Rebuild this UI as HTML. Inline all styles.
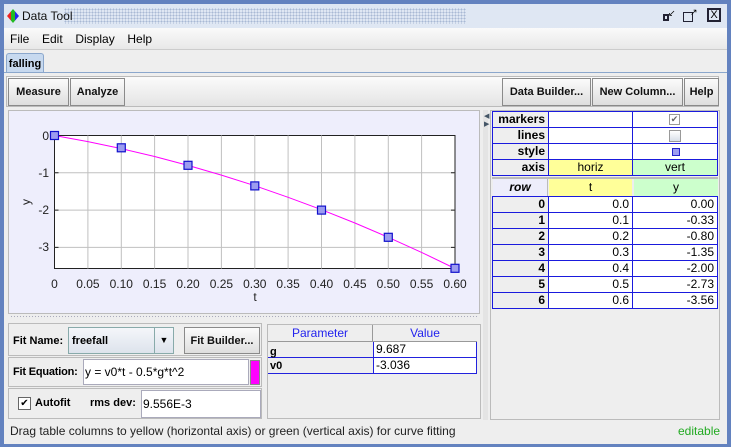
<!DOCTYPE html>
<html><head><meta charset="utf-8"><style>
*{box-sizing:border-box;margin:0;padding:0}
body{width:731px;height:447px;overflow:hidden;background:#6382bf;font-family:"Liberation Sans",sans-serif;font-size:12px;position:relative}
.a{position:absolute}
.b{font-weight:bold;font-size:11px}
.btn{position:absolute;border:1px solid #8a8a8a;background:linear-gradient(#fbfbfb,#dedede);font-weight:bold;font-size:11px;text-align:center;line-height:26px;color:#111;white-space:nowrap}
.cell{position:absolute;border-right:1px solid #1a1add;border-bottom:1px solid #1a1add;font-size:12px;line-height:15px;padding:0 3px}
</style></head><body>
<div class="a" style="left:4px;top:4px;width:723px;height:440px;background:#eeeeee"></div>
<div class="a" style="left:4px;top:4px;width:723px;height:24px;background:#dfe7f3"></div>
<div class="a" style="left:64px;top:8px;width:402px;height:16px;background-image:radial-gradient(#a9b9d4 0.8px,transparent 1px);background-size:3px 3px"></div>
<div class="a" style="left:7px;top:9px;width:12px;height:14px;background:linear-gradient(90deg,#e22 0,#e22 33%,#2b2 33%,#2b2 66%,#22e 66%);clip-path:polygon(50% 0,100% 50%,50% 100%,0 50%)"></div>
<div class="a" style="left:22px;top:9px;font-size:12px;color:#111">Data Tool</div>
<div class="a" style="left:663px;top:14px;width:6px;height:7px;border:2px solid #223;background:#dfe7f3"></div>
<div class="a" style="left:668px;top:8px;font-size:9px">↙</div>
<div class="a" style="left:683px;top:12px;width:10px;height:10px;border:1px solid #223"></div>
<div class="a" style="left:690px;top:7px;font-size:9px">↗</div>
<div class="a" style="left:707px;top:8px;width:14px;height:14px;border:2px solid #223;font-size:11px;line-height:10px;text-align:center">X</div>
<div class="a" style="left:4px;top:28px;width:723px;height:22px;background:linear-gradient(#fafafa,#e8e8e8);border-bottom:1px solid #ccc"></div>
<div class="a" style="left:10px;top:32px;font-size:12px;word-spacing:3px">File&nbsp; Edit&nbsp; Display&nbsp; Help</div>
<div class="a" style="left:6px;top:53px;width:38px;height:20px;background:#c7d9ef;border:1px solid #8ba7cc;border-bottom:none;border-radius:3px 3px 0 0;text-align:center;line-height:18px" ><span class="b">falling</span></div>
<div class="a" style="left:4px;top:72px;width:723px;height:1px;background:#8ba7cc"></div>
<div class="a" style="left:6px;top:76px;width:713px;height:31px;background:linear-gradient(#fbfbfb,#e4e4e4);border:1px solid #bbb"></div>
<div class="btn" style="left:8px;top:78px;width:61px;height:28px">Measure</div>
<div class="btn" style="left:70px;top:78px;width:55px;height:28px">Analyze</div>
<div class="btn" style="left:502px;top:78px;width:89px;height:28px">Data Builder...</div>
<div class="btn" style="left:592px;top:78px;width:91px;height:28px">New Column...</div>
<div class="btn" style="left:684px;top:78px;width:35px;height:28px">Help</div>
<div class="a" style="left:8px;top:110px;width:472px;height:204px;background:#eeeefc;border:1px solid #bbb"></div>
<div class="a" style="left:10px;top:315px;width:468px;height:4px;background-image:radial-gradient(#aab 0.6px,transparent 0.8px);background-size:3px 3px"></div>
<svg class="a" style="left:0;top:0" width="731" height="447">
<rect x="54.5" y="135.5" width="400.5" height="133" fill="#fff" stroke="#222"/>
<g stroke="#c0c0c0">
<path d="M87.9 135.5V268.5M121.3 135.5V268.5M154.6 135.5V268.5M188 135.5V268.5M221.4 135.5V268.5M254.8 135.5V268.5M288.1 135.5V268.5M321.5 135.5V268.5M354.9 135.5V268.5M388.3 135.5V268.5M421.6 135.5V268.5M54.5 172.8H455M54.5 210.1H455M54.5 247.4H455"/>
</g>
<g stroke="#222"><path d="M54.5 172.8h4M54.5 210.1h4M54.5 247.4h4M451 172.8h4M451 210.1h4M451 247.4h4"/></g>
<polyline fill="none" stroke="#f0f" stroke-width="1" points="54.5,135.5 87.9,141.6 121.3,148.6 154.6,156.5 188,165.4 221.4,175.1 254.8,185.7 288.1,197.3 321.5,209.7 354.9,223 388.3,237.3 421.6,252.4 455,268.5"/>
<g fill="#9c9cf0" stroke="#11c" stroke-width="1.2">
<rect x="50.5" y="131.5" width="8" height="8"/><rect x="117.3" y="143.8" width="8" height="8"/><rect x="184" y="161.3" width="8" height="8"/><rect x="250.8" y="181.9" width="8" height="8"/><rect x="317.5" y="206.1" width="8" height="8"/><rect x="384.3" y="233.3" width="8" height="8"/><rect x="451" y="264.3" width="8" height="8"/>
</g>
<g font-family="Liberation Sans" font-size="12" fill="#222" text-anchor="middle">
<text x="54.5" y="288">0</text><text x="87.9" y="288">0.05</text><text x="121.3" y="288">0.10</text><text x="154.6" y="288">0.15</text><text x="188" y="288">0.20</text><text x="221.4" y="288">0.25</text><text x="254.8" y="288">0.30</text><text x="288.1" y="288">0.35</text><text x="321.5" y="288">0.40</text><text x="354.9" y="288">0.45</text><text x="388.3" y="288">0.50</text><text x="421.6" y="288">0.55</text><text x="455" y="288">0.60</text>
<text x="255" y="301">t</text>
<g text-anchor="end"><text x="49" y="140">0</text><text x="49" y="177">-1</text><text x="49" y="214">-2</text><text x="49" y="251">-3</text></g>
<text x="30" y="202" transform="rotate(-90 30 202)" text-anchor="middle">y</text>
</g>
</svg>
<div class="a" style="left:483px;top:110px;width:5px;height:310px;background:#e4e4e4"></div>
<div class="a" style="left:484px;top:112px;font-size:7px;color:#456">◀<br>▶</div>
<div class="a" style="left:8px;top:323px;width:254px;height:33px;background:#eee;border:1px solid #bbb"></div>
<div class="a b" style="left:13px;top:335px">Fit Name:</div>
<div class="a" style="left:68px;top:327px;width:106px;height:27px;background:linear-gradient(#f4f6fa,#dde3ec);border:1px solid #8aa;padding:5px 3px" ><span class="b">freefall</span></div>
<div class="a" style="left:154px;top:328px;width:19px;height:25px;border-left:1px solid #8aa;font-size:9px;line-height:25px;text-align:center">▼</div>
<div class="btn" style="left:184px;top:327px;width:76px;height:27px">Fit Builder...</div>
<div class="a" style="left:8px;top:357px;width:254px;height:30px;background:#eee;border:1px solid #bbb"></div>
<div class="a b" style="left:13px;top:366px;letter-spacing:-0.2px">Fit Equation:</div>
<div class="a" style="left:83px;top:359px;width:166px;height:26px;background:#fff;border:1px solid #aab;padding:5px 1px">y = v0*t - 0.5*g*t^2</div>
<div class="a" style="left:250px;top:360px;width:10px;height:25px;background:#f0f;border:1px solid #888"></div>
<div class="a" style="left:8px;top:388px;width:254px;height:31px;background:#eee;border:1px solid #bbb"></div>
<div class="a" style="left:18px;top:397px;width:13px;height:13px;border:1px solid #666;background:#fff;font-size:10px;line-height:11px;text-align:center">✔</div>
<div class="a b" style="left:35px;top:397px">Autofit</div>
<div class="a b" style="left:90px;top:397px">rms dev:</div>
<div class="a" style="left:141px;top:390px;width:120px;height:28px;background:#fff;border:1px solid #aab;padding:6px 1px">9.556E-3</div>
<div class="a" style="left:267px;top:324px;width:214px;height:95px;background:#eee;border:1px solid #bbb"></div>
<div class="a" style="left:268px;top:325px;width:105px;height:17px;border-right:1px solid #999;border-bottom:1px solid #999;color:#22e;text-align:center;line-height:16px">Parameter</div>
<div class="a" style="left:373px;top:325px;width:104px;height:17px;border-bottom:1px solid #999;color:#22e;text-align:center;line-height:16px">Value</div>
<div class="a" style="left:268px;top:342px;width:105px;height:16px;border-bottom:1px solid #22d;padding-left:2px;line-height:18px" ><span class="b">g</span></div>
<div class="a" style="left:373px;top:342px;width:104px;height:16px;background:#fff;border:1px solid #22d;border-top:none;padding-left:2px;line-height:15px">9.687</div>
<div class="a" style="left:268px;top:358px;width:105px;height:16px;border-bottom:1px solid #22d;padding-left:2px;line-height:15px" ><span class="b">v0</span></div>
<div class="a" style="left:373px;top:358px;width:104px;height:16px;background:#fff;border:1px solid #22d;border-top:none;padding-left:2px;line-height:15px">-3.036</div>
<div class="a" style="left:490px;top:110px;width:230px;height:310px;background:#eee;border:1px solid #bbb"></div>
<div class="a" style="left:492px;top:111px;width:226px;height:65px;background:#fff;border-top:1px solid #1a1add;border-left:1px solid #1a1add"></div>
<div class="cell b" style="left:493px;top:112px;width:56px;height:16px;background:#eee;text-align:right;font-size:12px">markers</div>
<div class="cell" style="left:549px;top:112px;width:84px;height:16px"></div>
<div class="cell" style="left:633px;top:112px;width:85px;height:16px"></div>
<div class="a" style="left:669px;top:114px;width:11px;height:11px;border:1px solid #999;font-size:9px;line-height:9px;color:#666;text-align:center">✔</div>
<div class="cell b" style="left:493px;top:128px;width:56px;height:16px;background:#eee;text-align:right;font-size:12px">lines</div>
<div class="cell" style="left:549px;top:128px;width:84px;height:16px"></div>
<div class="cell" style="left:633px;top:128px;width:85px;height:16px"></div>
<div class="a" style="left:669px;top:130px;width:12px;height:12px;border:1px solid #999;background:linear-gradient(#fff,#d8dfe9)"></div>
<div class="cell b" style="left:493px;top:144px;width:56px;height:16px;background:#eee;text-align:right;font-size:12px">style</div>
<div class="cell" style="left:549px;top:144px;width:84px;height:16px"></div>
<div class="cell" style="left:633px;top:144px;width:85px;height:16px"></div>
<div class="a" style="left:672px;top:148px;width:8px;height:8px;border:1px solid #22c;background:#9c9cf0"></div>
<div class="cell b" style="left:493px;top:160px;width:56px;height:16px;background:#eee;text-align:right;font-size:12px">axis</div>
<div class="cell" style="left:549px;top:160px;width:84px;height:16px;background:#ffff99;text-align:center">horiz</div>
<div class="cell" style="left:633px;top:160px;width:85px;height:16px;background:#ccffcc;text-align:center">vert</div>
<div class="a" style="left:492px;top:177px;width:226px;height:2px;background:#bbb"></div>
<div class="a" style="left:493px;top:179px;width:55px;height:17px;background:#ededfb;border-right:1px solid #bbb;text-align:center;line-height:17px;font-weight:bold;font-style:italic">row</div>
<div class="a" style="left:549px;top:179px;width:83px;height:17px;background:#ffff99;text-align:center;line-height:17px">t</div>
<div class="a" style="left:634px;top:179px;width:84px;height:17px;background:#ccffcc;text-align:center;line-height:17px">y</div>
<div class="a" style="left:492px;top:196px;width:226px;height:113px;background:#fff;border-top:1px solid #1a1add;border-left:1px solid #1a1add"></div>
<div class="cell b" style="left:493px;top:197px;width:56px;height:16px;background:#eee;text-align:right;font-size:12px">0</div><div class="cell" style="left:549px;top:197px;width:84px;height:16px;text-align:right">0.0</div><div class="cell" style="left:633px;top:197px;width:85px;height:16px;text-align:right">0.00</div>
<div class="cell b" style="left:493px;top:213px;width:56px;height:16px;background:#eee;text-align:right;font-size:12px">1</div><div class="cell" style="left:549px;top:213px;width:84px;height:16px;text-align:right">0.1</div><div class="cell" style="left:633px;top:213px;width:85px;height:16px;text-align:right">-0.33</div>
<div class="cell b" style="left:493px;top:229px;width:56px;height:16px;background:#eee;text-align:right;font-size:12px">2</div><div class="cell" style="left:549px;top:229px;width:84px;height:16px;text-align:right">0.2</div><div class="cell" style="left:633px;top:229px;width:85px;height:16px;text-align:right">-0.80</div>
<div class="cell b" style="left:493px;top:245px;width:56px;height:16px;background:#eee;text-align:right;font-size:12px">3</div><div class="cell" style="left:549px;top:245px;width:84px;height:16px;text-align:right">0.3</div><div class="cell" style="left:633px;top:245px;width:85px;height:16px;text-align:right">-1.35</div>
<div class="cell b" style="left:493px;top:261px;width:56px;height:16px;background:#eee;text-align:right;font-size:12px">4</div><div class="cell" style="left:549px;top:261px;width:84px;height:16px;text-align:right">0.4</div><div class="cell" style="left:633px;top:261px;width:85px;height:16px;text-align:right">-2.00</div>
<div class="cell b" style="left:493px;top:277px;width:56px;height:16px;background:#eee;text-align:right;font-size:12px">5</div><div class="cell" style="left:549px;top:277px;width:84px;height:16px;text-align:right">0.5</div><div class="cell" style="left:633px;top:277px;width:85px;height:16px;text-align:right">-2.73</div>
<div class="cell b" style="left:493px;top:293px;width:56px;height:16px;background:#eee;text-align:right;font-size:12px">6</div><div class="cell" style="left:549px;top:293px;width:84px;height:16px;text-align:right">0.6</div><div class="cell" style="left:633px;top:293px;width:85px;height:16px;text-align:right">-3.56</div>
<div class="a" style="left:10px;top:424px;font-size:12px;color:#222">Drag table columns to yellow (horizontal axis) or green (vertical axis) for curve fitting</div>
<div class="a" style="left:678px;top:424px;font-size:12px;color:#2a2">editable</div>
</body></html>
